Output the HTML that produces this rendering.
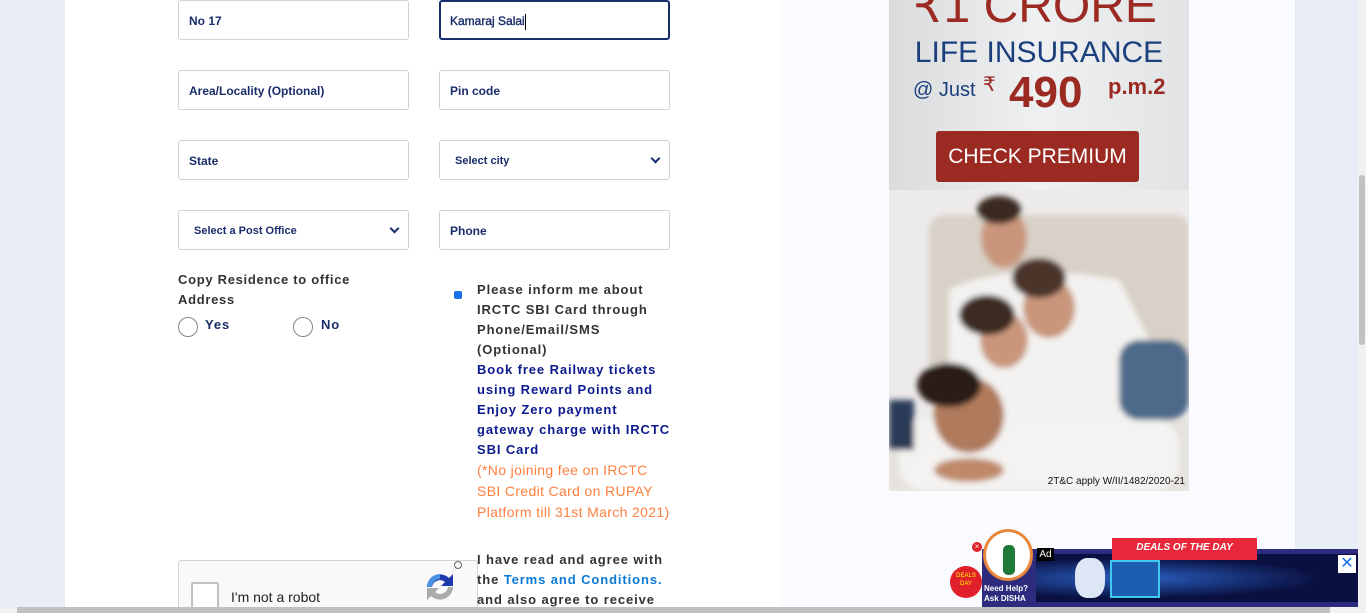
<!DOCTYPE html>
<html><head><meta charset="utf-8"><style>
*{box-sizing:border-box;margin:0;padding:0}
html,body{width:1366px;height:613px;overflow:hidden}
body{background:#e9edf5;font-family:"Liberation Sans",Arial,sans-serif;position:relative}
.main{position:absolute;left:65px;top:0;width:715px;height:613px;background:#fff}
.mid{position:absolute;left:780px;top:0;width:515px;height:613px;background:#f9fbfe}
.f{position:absolute;width:231px;height:40px;border:1px solid #cfd3d8;border-radius:3px;background:#fff;color:#1a2d6b;font-size:12px;font-weight:bold;padding:0 0 0 10px;line-height:40px}
.f.s{font-size:11px;padding-left:15px}
.f.s:after{content:"";position:absolute;right:10px;top:14px;width:5px;height:5px;border-right:2px solid #1a2d6b;border-bottom:2px solid #1a2d6b;transform:rotate(45deg)}
.t{position:absolute;font-size:13px;font-weight:bold;letter-spacing:.9px;line-height:20px;color:#333}
.radio{position:absolute;width:20px;height:20px;border:1px solid #888;border-radius:50%;background:#fff}
</style></head><body>
<div class="main"></div>
<div class="mid"></div>
<div class="f" style="left:178px;top:0">No 17</div>
<div class="f" style="left:439px;top:0;border:2px solid #1a2d6b;padding-left:9px;line-height:38px;font-weight:normal;-webkit-text-stroke:.4px #1a2d6b">Kamaraj Salai<span style="display:inline-block;width:1px;height:16px;background:#000;vertical-align:middle"></span></div>
<div class="f" style="left:178px;top:70px">Area/Locality (Optional)</div>
<div class="f" style="left:439px;top:70px">Pin code</div>
<div class="f" style="left:178px;top:140px">State</div>
<div class="f s" style="left:439px;top:140px">Select city</div>
<div class="f s" style="left:178px;top:210px">Select a Post Office</div>
<div class="f" style="left:439px;top:210px">Phone</div>
<div class="t" style="left:178px;top:270px;width:200px;letter-spacing:.7px">Copy Residence to office Address</div>
<div class="radio" style="left:178px;top:317px"></div><div class="t" style="left:205px;top:315px;color:#1a2d6b">Yes</div>
<div class="radio" style="left:293px;top:317px"></div><div class="t" style="left:321px;top:315px;color:#1a2d6b">No</div>
<div style="position:absolute;left:454px;top:291px;width:8px;height:8px;background:#1a73e8;border-radius:2px"></div>
<div class="t" style="left:477px;top:280px;width:196px">Please inform me about IRCTC SBI Card through Phone/Email/SMS<br>(Optional)<br><span style="color:#0b1a8c">Book free Railway tickets using Reward Points and Enjoy Zero payment gateway charge with IRCTC SBI Card</span><br><span style="color:#ff7f3f;font-weight:normal;letter-spacing:.35px;font-size:14px;white-space:nowrap">(*No joining fee on IRCTC<br>SBI Credit Card on RUPAY<br>Platform till 31st March 2021)</span></div>
<div style="position:absolute;left:178px;top:560px;width:300px;height:60px;background:#f9f9f9;border:1px solid #d3d3d3;border-radius:3px"></div>
<div style="position:absolute;left:191px;top:582px;width:28px;height:28px;background:#fff;border:2px solid #c1c1c1;border-radius:2px"></div>
<div style="position:absolute;left:231px;top:589px;font-size:14px;color:#222">I'm not a robot</div>
<svg style="position:absolute;left:423px;top:570px" width="34" height="34" viewBox="0 0 34 34"><path d="M4 17a13 13 0 0 1 22-9l4-4v12H18l4-4a8 8 0 0 0-13 5z" fill="#1c3aa9"/><path d="M30 17a13 13 0 0 1-22 9l-4 4V18h12l-4 4a8 8 0 0 0 13-5z" fill="#ababab"/><path d="M17 4a13 13 0 0 0-13 13h5a8 8 0 0 1 8-8z" fill="#4a90e2"/></svg>
<div style="position:absolute;left:454px;top:561px;width:8px;height:8px;border:1px solid #666;border-radius:50%"></div>
<div class="t" style="left:477px;top:550px;width:200px">I have read and agree with the <span style="color:#0a7ad6">Terms and Conditions.</span> and also agree to receive</div>
<div style="position:absolute;left:889px;top:0;width:300px;height:491px;background:linear-gradient(90deg,#dadbdd,#eef0f2 50%,#e2e3e5);overflow:hidden">
<div style="position:absolute;left:24px;top:-18px;white-space:nowrap;font-size:48px;color:#9b2a22;line-height:50px">&#8377;1 CRORE</div>
<div style="position:absolute;left:0;top:36px;width:300px;text-align:center;font-size:30px;color:#1b3f7c;line-height:34px">LIFE INSURANCE</div>
<div style="position:absolute;left:24px;top:79px;font-size:20px;color:#1b3f7c">@ Just</div>
<div style="position:absolute;left:94px;top:72px;font-size:20px;color:#9b2a22">&#8377;</div>
<div style="position:absolute;left:120px;top:68px;font-size:44px;font-weight:bold;color:#9b2a22;line-height:50px">490</div>
<div style="position:absolute;left:219px;top:74px;font-size:22px;font-weight:bold;color:#9b2a22">p.m.2</div>
<div style="position:absolute;left:47px;top:131px;width:203px;height:51px;background:#9b2a22;border-radius:3px;color:#fff;font-size:21px;text-align:center;line-height:51px">CHECK PREMIUM</div>
<svg style="position:absolute;left:0;top:190px" width="300" height="301"><defs><filter id="b"><feGaussianBlur stdDeviation="3"/></filter></defs><rect x="0" y="0" width="300" height="301" fill="#eceaea"/><g filter="url(#b)"><rect x="40" y="25" width="260" height="170" rx="15" fill="#d9d1c8"/><rect x="0" y="230" width="300" height="71" fill="#e5e2dd"/><ellipse cx="115" cy="48" rx="23" ry="30" fill="#c9967c"/><ellipse cx="110" cy="20" rx="22" ry="14" fill="#3a2a22"/><path d="M60 100 Q120 70 230 90 L260 150 L250 230 L60 230Z" fill="#f3f2f0"/><ellipse cx="160" cy="118" rx="26" ry="30" fill="#c9967c"/><ellipse cx="150" cy="88" rx="27" ry="20" fill="#4b3429"/><ellipse cx="115" cy="150" rx="24" ry="28" fill="#c9967c"/><ellipse cx="98" cy="125" rx="28" ry="20" fill="#3d2a20"/><rect x="230" y="150" width="70" height="80" rx="20" fill="#4d6a8a"/><rect x="10" y="230" width="280" height="70" rx="25" fill="#f4f3f1"/><ellipse cx="80" cy="225" rx="35" ry="38" fill="#b07a5c"/><ellipse cx="60" cy="195" rx="32" ry="22" fill="#2a1d17"/><ellipse cx="80" cy="280" rx="35" ry="12" fill="#c08a6a"/><rect x="0" y="210" width="25" height="50" fill="#2a3b58"/></g></svg>
<div style="position:absolute;right:4px;top:476px;font-size:10px;color:#111">2T&amp;C apply W/II/1482/2020-21</div>
</div>
<div style="position:absolute;left:1358px;top:0;width:8px;height:613px;background:#f1f1f1"></div>
<div style="position:absolute;left:1359px;top:175px;width:6px;height:170px;background:#c1c1c1;border-radius:3px"></div>
<div style="position:absolute;left:0;top:607px;width:1366px;height:6px;background:#f1f1f1"></div>
<div style="position:absolute;left:17px;top:607px;width:1313px;height:6px;background:#c1c1c1"></div>
<div style="position:absolute;left:982px;top:549px;width:376px;height:58px;background:#2d2b7e"></div>
<div style="position:absolute;left:1036px;top:554px;width:322px;height:48px;background:radial-gradient(ellipse at 30% 50%,#2a5fc0,#0a1040 60%)"></div>
<div style="position:absolute;left:1075px;top:558px;width:30px;height:40px;border-radius:40%;background:#dde6f5"></div>
<div style="position:absolute;left:1110px;top:560px;width:50px;height:38px;border:2px solid #40c8f0;background:#1c5fb0"></div>
<div style="position:absolute;left:1037px;top:548px;width:17px;height:13px;background:#000;color:#fff;font-size:10px;line-height:13px;text-align:center">Ad</div>
<div style="position:absolute;left:1112px;top:538px;width:145px;height:22px;background:#e8283a;color:#fff;font-size:10px;font-style:italic;font-weight:bold;text-align:center;line-height:20px">DEALS OF THE DAY</div>
<div style="position:absolute;left:1338px;top:555px;width:18px;height:18px;background:#fff;color:#1a73e8;font-size:16px;text-align:center;line-height:18px">✕</div>
<div style="position:absolute;left:983px;top:529px;width:50px;height:52px;border:3px solid #e8873a;border-radius:50%;background:#fff"></div>
<div style="position:absolute;left:1003px;top:545px;width:12px;height:30px;background:#1f7a3a;border-radius:5px"></div>
<div style="position:absolute;left:984px;top:584px;font-size:8px;font-weight:bold;color:#fff;line-height:10px">Need Help?<br>Ask DISHA</div>
<div style="position:absolute;left:950px;top:566px;width:32px;height:32px;border-radius:50%;background:#e0202a;color:#ff0;font-size:6px;text-align:center;line-height:8px;padding-top:6px">DEALS<br>DAY</div>
<div style="position:absolute;left:972px;top:542px;width:10px;height:10px;border-radius:50%;background:#e0202a;color:#fff;font-size:8px;text-align:center;line-height:10px">×</div>
</body></html>
